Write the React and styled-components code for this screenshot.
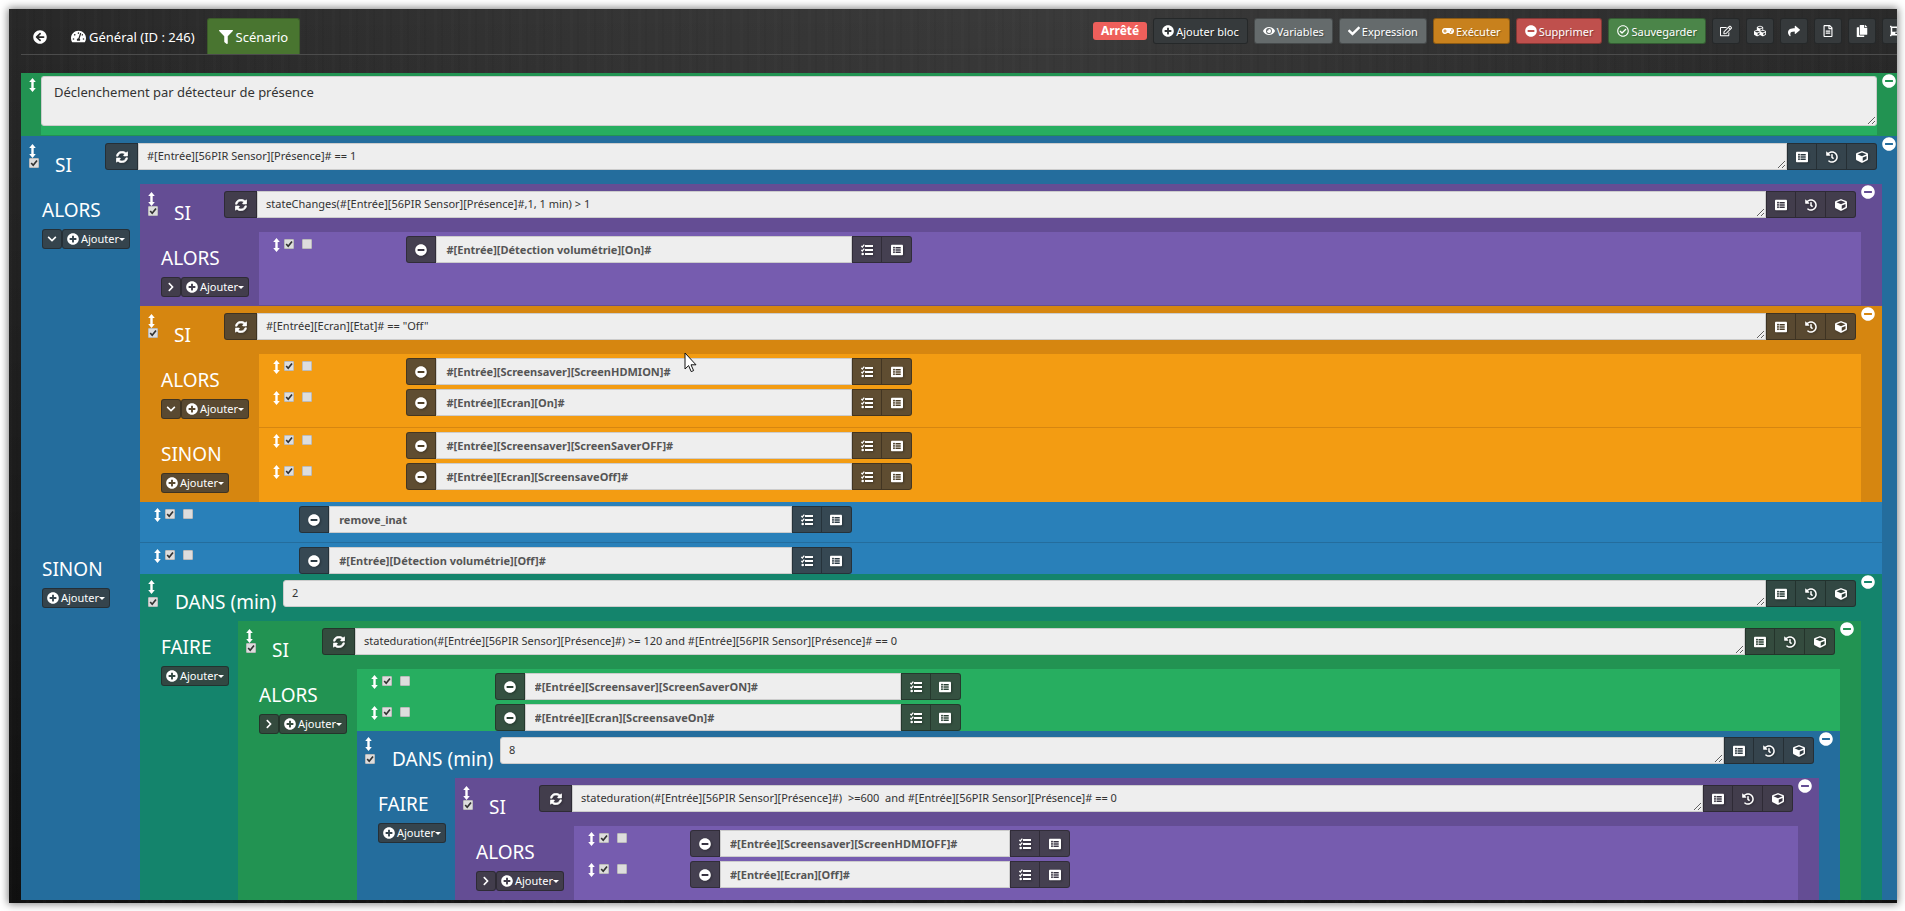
import React from 'react';
import styled, { createGlobalStyle } from 'styled-components';
import {
  FaArrowCircleLeft, FaCheck, FaChevronDown, FaChevronRight, FaCopy, FaCube, FaCubes,
  FaEye, FaFilter, FaGamepad, FaHistory, FaListAlt, FaMinusCircle, FaObjectGroup,
  FaPlusCircle, FaRegCheckCircle, FaRegEdit, FaRegFileAlt, FaShare, FaSyncAlt,
  FaTachometerAlt
} from 'react-icons/fa';

const PALETTE = {
  green: { dark: '#229352', light: '#27ae60' },
  blue: { dark: '#246d9d', light: '#2980b9' },
  purple: { dark: '#644d94', light: '#765caf' },
  orange: { dark: '#d68610', light: '#f39c12' },
  teal: { dark: '#14846c', light: '#16a085' },
};

const GlobalStyle = createGlobalStyle`
  * { box-sizing: border-box; }
  body {
    margin: 0;
    background: #fff;
    font-family: 'Noto Sans', 'Open Sans', sans-serif;
    font-size: 13px;
    color: #fff;
  }
  button, input, textarea { font-family: inherit; }
`

const Page = styled.div`
  height: 100vh;
  padding: 9px 8px 9px 9px;
  overflow: hidden;
`

const Frame = styled.main`
  height: calc(100% + 1px);
  padding: 9px 0 3px 12px;
  display: flex;
  flex-direction: column;
  overflow: hidden;
  box-shadow: 0 0 8px 1px rgba(0, 0, 0, 0.5);
  background:
    repeating-linear-gradient(90deg, rgba(255, 255, 255, 0.01) 0 3px, transparent 3px 7px, rgba(0, 0, 0, 0.04) 7px 9px, transparent 9px 17px),
    linear-gradient(180deg, transparent 0, rgba(0, 0, 0, 0.6) 100%),
    linear-gradient(90deg, #282828 0, #343434 30%, #3a3a3a 55%, #2a2a2a 100%);
`

const TopBar = styled.header`
  display: flex;
  justify-content: space-between;
  align-items: flex-start;
  height: 37px;
  flex-shrink: 0;
  border-bottom: 1px solid #4c4c4c;
`

const Tabs = styled.nav`
  display: flex;
`

const Tab = styled.a`
  display: flex;
  align-items: center;
  gap: 3px;
  height: 36px;
  padding: 0 11px;
  border: 1px solid ${props => props.$active ? '#3c5c2a' : 'transparent'};
  border-bottom: 0;
  border-radius: 3px 3px 0 0;
  background: ${props => props.$active ? '#497530' : 'transparent'};
  color: #fff;
  font-size: 13px;
  text-decoration: none;
`

const Tools = styled.div`
  display: flex;
  gap: 6px;
  margin-right: -13px;
`

const Status = styled.span`
  align-self: center;
  padding: 0 8px;
  border-radius: 3px;
  background: #ee5f5b;
  font-size: 12px;
  font-weight: 700;
  line-height: 18px;
`

const ToolButton = styled.button`
  display: flex;
  align-items: center;
  gap: 2px;
  height: 26px;
  padding: 0 ${props => props.$icon ? '7px' : '8px'};
  border: 1px solid rgba(0, 0, 0, 0.3);
  border-radius: 3px;
  background: ${props => props.$color || '#363a3c'};
  color: #fff;
  font-size: 11px;
  text-shadow: 1px 1px 1px rgba(0, 0, 0, 0.3);
  white-space: nowrap;
  svg {
    width: 12px;
    height: 12px;
  }
`

const Scenario = styled.div`
  display: flex;
  flex-direction: column;
  flex: 1;
  min-height: 0;
  margin: 18px -6px 0 0;
  overflow: hidden;
`

const Block = styled.section`
  position: relative;
  flex-shrink: 0;
  padding-right: 21px;
  background: ${props => PALETTE[props.$color].dark};
`

const RemoveBlock = styled.button`
  position: absolute;
  top: 1px;
  right: 7px;
  display: flex;
  padding: 0;
  border: 0;
  background: none;
  color: #fff;
  font-size: 14px;
`

const CommentRow = styled.div`
  display: flex;
  padding-top: 3px;
  border-bottom: 1px solid ${PALETTE.green.dark};
`

const CommentHandle = styled.div`
  width: 20px;
  padding: 2px 0 0 8px;
`

const CommentBody = styled.div`
  flex: 1;
  margin-right: 5px;
  padding-bottom: 9px;
  display: flex;
  background: ${PALETTE.green.light};
`

const Comment = styled.textarea`
  flex: 1;
  height: 50px;
  padding: 5px 12px;
  border: 1px solid #ccc;
  border-radius: 3px;
  background: #eee;
  color: #333;
  font-size: 13px;
  line-height: 20px;
`

const BlockHeader = styled.div`
  display: flex;
  height: ${props => props.$wide ? '47px' : '48px'};
  padding: ${props => props.$wide ? '6px' : '7px'} 5px 0 8px;
`

const Handles = styled.div`
  width: ${props => props.$wide ? '27px' : '26px'};
  display: flex;
  flex-direction: column;
  gap: ${props => props.$wide ? '3px' : '0'};
  padding-top: ${props => props.$wide ? '0' : '1px'};
`

const HandleIcon = styled.svg`
  display: block;
  width: 7px;
  height: 14px;
  flex-shrink: 0;
`

const Check = styled.input`
  appearance: none;
  width: 10px;
  height: 10px;
  margin: 0;
  flex-shrink: 0;
  border: 1px solid #bbb;
  border-radius: 1px;
  background: #ddd;
  &:checked {
    background: #ddd url("data:image/svg+xml,%3Csvg xmlns='http://www.w3.org/2000/svg' viewBox='0 0 8 8'%3E%3Cpath d='M1.2 4l2 2.2L7 1.5' fill='none' stroke='%23333' stroke-width='1.7'/%3E%3C/svg%3E");
  }
`

const BlockTitle = styled.h2`
  width: ${props => props.$wide ? '108px' : '50px'};
  margin: 8px 0 0;
  font-size: 19px;
  font-weight: 400;
  line-height: 28px;
  white-space: nowrap;
`

const InputGroup = styled.div`
  display: flex;
  flex: 1;
  height: 27px;
`

const GroupButton = styled.button`
  display: flex;
  align-items: center;
  justify-content: center;
  width: ${props => props.$wide ? '33px' : '30px'};
  height: 27px;
  flex-shrink: 0;
  padding: 0;
  border: 1px solid rgba(0, 0, 0, 0.3);
  background: rgba(58, 58, 58, 0.8);
  color: #fff;
  font-size: 12px;
  & + & { border-left: 0; }
  &:first-child { border-radius: 3px 0 0 3px; }
  &:last-child { border-radius: 0 3px 3px 0; }
  svg { filter: drop-shadow(1px 1px 1px rgba(0, 0, 0, 0.3)); }
`

const Condition = styled.textarea`
  flex: 1;
  min-width: 0;
  height: 27px;
  padding: 3px 8px;
  border: 1px solid #ccc;
  border-radius: ${props => props.$rounded ? '3px 0 0 3px' : '0'};
  background: #eee;
  color: #333;
  font-size: 11px;
  line-height: 17px;
  overflow: hidden;
  white-space: pre;
`

const Branch = styled.div`
  display: flex;
  min-height: 74px;
`

const Side = styled.div`
  width: ${props => props.$narrow ? '98px' : '119px'};
  flex-shrink: 0;
  padding: 12px 0 0 21px;
`

const SideLabel = styled.h3`
  margin: 0 0 5px;
  font-size: 19px;
  font-weight: 400;
  line-height: 28px;
`

const SideButtons = styled.div`
  display: flex;
`

const SideButton = styled.button`
  display: flex;
  align-items: center;
  gap: 2px;
  height: 20px;
  padding: 0 4px;
  border: 1px solid rgba(0, 0, 0, 0.3);
  border-radius: 3px;
  background: rgba(58, 58, 58, 0.8);
  color: #fff;
  font-size: 11px;
  line-height: 18px;
`

const AddLabel = styled.span`
  display: flex;
  align-items: center;
`

const Caret = styled.span`
  border: 3px solid transparent;
  border-top-color: #fff;
  border-bottom: 0;
`

const BranchBody = styled.div`
  flex: 1;
  min-width: 0;
  padding-bottom: ${props => props.$flush ? '0' : '9px'};
  border-bottom: ${props => props.$line ? '1px solid ' + PALETTE[props.$color].dark : '0'};
  background: ${props => PALETTE[props.$color].light};
`

const ActionRow = styled.div`
  display: flex;
  padding-top: 4px;
`

const ActionOptions = styled.div`
  display: flex;
  width: calc(100% / 12);
  padding: 2px 0 0 14px;
`

const Options = styled.div`
  display: flex;
  align-items: flex-start;
  gap: 8px;
  padding: 1px 0 0 4px;
`

const ActionField = styled.div`
  width: calc(100% / 3);
  padding: 0 14px;
`

const Command = styled.input`
  flex: 1;
  min-width: 0;
  height: 27px;
  padding: 0 9px;
  border: 1px solid #ccc;
  border-radius: 0;
  background: #eee;
  color: #555;
  font-size: 11px;
  font-weight: 700;
`

const Cursor = styled.svg`
  position: absolute;
  left: 684px;
  top: 352px;
  width: 13px;
  height: 21px;
`

const Handle = () => (
  <HandleIcon viewBox="0 0 7 14" aria-hidden="true">
    <path d="M3.5 0L6.8 4H4.7V10H6.8L3.5 14L.2 10H2.3V4H.2Z" fill="currentColor" />
  </HandleIcon>
)

const TasksIcon = () => (
  <svg width="12" height="12" viewBox="0 0 12 12" aria-hidden="true">
    <path d="M4 1H12V3H4ZM4 5H12V7H4ZM4 9H12V11H4Z" fill="currentColor" />
    <path d="M.3 2l1 1 2-2.4M.3 6l1 1 2-2.4" fill="none" stroke="currentColor" strokeWidth="1.3" />
    <circle cx="1.7" cy="10" r="1.3" fill="currentColor" />
  </svg>
)

const Action = ({ value }) => (
  <ActionRow>
    <ActionOptions>
      <Handle />
      <Options>
        <Check type="checkbox" defaultChecked aria-label="Activer" />
        <Check type="checkbox" aria-label="Parallèle" />
      </Options>
    </ActionOptions>
    <ActionField>
      <InputGroup>
        <GroupButton aria-label="Retirer"><FaMinusCircle /></GroupButton>
        <Command defaultValue={value} aria-label="Action" />
        <GroupButton aria-label="Mot-clé"><TasksIcon /></GroupButton>
        <GroupButton aria-label="Commande"><FaListAlt /></GroupButton>
      </InputGroup>
    </ActionField>
  </ActionRow>
)

const BranchRow = ({ label, toggle, color, narrow, line, flush, children }) => (
  <Branch>
    <Side $narrow={narrow}>
      <SideLabel>{label}</SideLabel>
      <SideButtons>
        {toggle && (
          <SideButton aria-label="Replier">
            {toggle === 'down' ? <FaChevronDown size={10} /> : <FaChevronRight size={10} />}
          </SideButton>
        )}
        <SideButton><FaPlusCircle size={12} /><AddLabel>Ajouter<Caret /></AddLabel></SideButton>
      </SideButtons>
    </Side>
    <BranchBody $color={color} $line={line} $flush={flush}>{children}</BranchBody>
  </Branch>
)

const Bloc = ({ type, color, value, children }) => {
  const wide = type !== 'SI'
  return (
    <Block $color={color}>
      <RemoveBlock aria-label="Supprimer le bloc"><FaMinusCircle /></RemoveBlock>
      <BlockHeader $wide={wide}>
        <Handles $wide={wide}>
          <Handle />
          <Check type="checkbox" defaultChecked aria-label="Activer le bloc" />
        </Handles>
        <BlockTitle $wide={wide}>{type}</BlockTitle>
        <InputGroup>
          {!wide && (
            <GroupButton $wide aria-label="Répétition">
              <FaSyncAlt stroke="currentColor" strokeWidth={24} />
            </GroupButton>
          )}
          <Condition $rounded={wide} defaultValue={value} aria-label={type} rows={1} />
          <GroupButton aria-label="Commande"><FaListAlt /></GroupButton>
          <GroupButton aria-label="Historique"><FaHistory /></GroupButton>
          <GroupButton aria-label="Objet"><FaCube /></GroupButton>
        </InputGroup>
      </BlockHeader>
      {children}
    </Block>
  )
}

const App = () => (
  <Page>
    <GlobalStyle />
    <Frame>
      <TopBar>
        <Tabs>
          <Tab href="#retour" aria-label="Retour"><FaArrowCircleLeft size={14} /></Tab>
          <Tab href="#general"><FaTachometerAlt size={15} />Général (ID : 246)</Tab>
          <Tab href="#scenario" $active><FaFilter size={14} />Scénario</Tab>
        </Tabs>
        <Tools>
          <Status>Arrêté</Status>
          <ToolButton><FaPlusCircle />Ajouter bloc</ToolButton>
          <ToolButton $color="#656b6c"><FaEye />Variables</ToolButton>
          <ToolButton $color="#656b6c"><FaCheck />Expression</ToolButton>
          <ToolButton $color="#c8811d"><FaGamepad />Exécuter</ToolButton>
          <ToolButton $color="#bf504d"><FaMinusCircle />Supprimer</ToolButton>
          <ToolButton $color="#4b8549"><FaRegCheckCircle />Sauvegarder</ToolButton>
          <ToolButton $icon aria-label="Modifier"><FaRegEdit /></ToolButton>
          <ToolButton $icon aria-label="Objets"><FaCubes /></ToolButton>
          <ToolButton $icon aria-label="Partager"><FaShare /></ToolButton>
          <ToolButton $icon aria-label="Journal"><FaRegFileAlt /></ToolButton>
          <ToolButton $icon aria-label="Dupliquer"><FaCopy /></ToolButton>
          <ToolButton $icon aria-label="Liens"><FaObjectGroup /></ToolButton>
        </Tools>
      </TopBar>

      <Scenario>
        <Block $color="green">
          <RemoveBlock aria-label="Supprimer le bloc"><FaMinusCircle /></RemoveBlock>
          <CommentRow>
            <CommentHandle><Handle /></CommentHandle>
            <CommentBody>
              <Comment defaultValue="Déclenchement par détecteur de présence" aria-label="Commentaire" />
            </CommentBody>
          </CommentRow>
        </Block>

        <Bloc type="SI" color="blue" value="#[Entrée][56PIR Sensor][Présence]# == 1">
          <BranchRow label="ALORS" toggle="down" color="blue" line>
            <Bloc type="SI" color="purple" value="stateChanges(#[Entrée][56PIR Sensor][Présence]#,1, 1 min) > 1">
              <BranchRow label="ALORS" toggle="right" color="purple" line>
                <Action value="#[Entrée][Détection volumétrie][On]#" />
              </BranchRow>
            </Bloc>
            <Bloc type="SI" color="orange" value={'#[Entrée][Ecran][Etat]# == "Off"'}>
              <BranchRow label="ALORS" toggle="down" color="orange" line>
                <Action value="#[Entrée][Screensaver][ScreenHDMION]#" />
                <Action value="#[Entrée][Ecran][On]#" />
              </BranchRow>
              <BranchRow label="SINON" color="orange">
                <Action value="#[Entrée][Screensaver][ScreenSaverOFF]#" />
                <Action value="#[Entrée][Ecran][ScreensaveOff]#" />
              </BranchRow>
            </Bloc>
            <Action value="remove_inat" />
          </BranchRow>
          <BranchRow label="SINON" color="blue" flush>
            <Action value="#[Entrée][Détection volumétrie][Off]#" />
            <Bloc type="DANS (min)" color="teal" value="2">
              <BranchRow label="FAIRE" color="teal" narrow flush>
                <Bloc type="SI" color="green" value="stateduration(#[Entrée][56PIR Sensor][Présence]#) >= 120 and #[Entrée][56PIR Sensor][Présence]# == 0">
                  <BranchRow label="ALORS" toggle="right" color="green" flush>
                    <Action value="#[Entrée][Screensaver][ScreenSaverON]#" />
                    <Action value="#[Entrée][Ecran][ScreensaveOn]#" />
                    <Bloc type="DANS (min)" color="blue" value="8">
                      <BranchRow label="FAIRE" color="blue" narrow flush>
                        <Bloc type="SI" color="purple" value="stateduration(#[Entrée][56PIR Sensor][Présence]#)  >=600  and #[Entrée][56PIR Sensor][Présence]# == 0">
                          <BranchRow label="ALORS" toggle="right" color="purple">
                            <Action value="#[Entrée][Screensaver][ScreenHDMIOFF]#" />
                            <Action value="#[Entrée][Ecran][Off]#" />
                          </BranchRow>
                        </Bloc>
                      </BranchRow>
                    </Bloc>
                  </BranchRow>
                </Bloc>
              </BranchRow>
            </Bloc>
          </BranchRow>
        </Bloc>
      </Scenario>
    </Frame>
    <Cursor viewBox="0 0 13 21" aria-hidden="true">
      <path d="M1 1v16l3.6-3.4 2.6 6 2.4-1-2.6-5.8H12z" fill="#fff" stroke="#111" strokeWidth="1" />
    </Cursor>
  </Page>
)

export default App;
